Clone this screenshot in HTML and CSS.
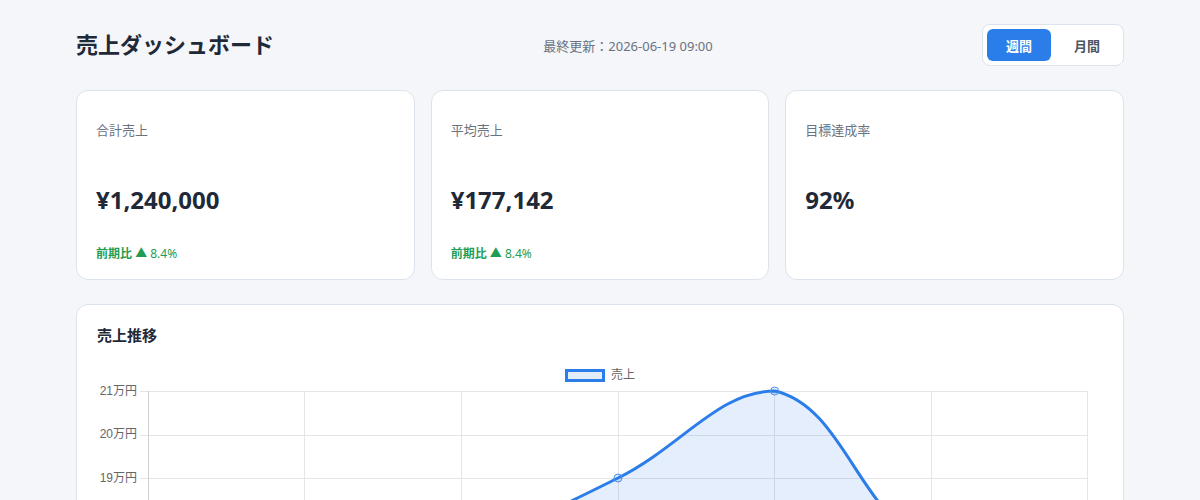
FILE: index.html
```html
<!DOCTYPE html>
<html lang="ja">
<head>
    <meta charset="UTF-8">
    <meta name="viewport" content="width=device-width, initial-scale=1.0">
    <title>売上ダッシュボード</title>
    <link rel="stylesheet" href="styles.css">
</head>
<body>

<div class="wrap">
    <div class="header">
        <h1>売上ダッシュボード</h1>
        <p class="updated">最終更新：2026-06-19 09:00</p>
        <div class="toggle">
            <button class="active">週間</button>
            <button>月間</button>
        </div>
    </div>

    <div class="cards">
        <div class="card">
            <p class="label">合計売上</p>
            <p class="value">¥1,240,000</p>
            <p class="change"><b>前期比</b> ▲ 8.4%</p>
        </div>
        <div class="card">
            <p class="label">平均売上</p>
            <p class="value">¥177,142</p>
            <p class="change"><b>前期比</b> ▲ 8.4%</p>
        </div>
        <div class="card">
            <p class="label">目標達成率</p>
            <p class="value">92%</p>
        </div>
    </div>

    <div class="chart-card">
        <h2>売上推移</h2>
        <svg class="chart" width="1006" height="360" viewBox="0 0 1006 360">
            <!-- 凡例 -->
            <rect x="469.5" y="14.5" width="37" height="10" fill="#e3edfa" stroke="#2b7de9" stroke-width="3"/>
            <text class="legend" x="514" y="20">売上</text>

            <!-- グリッド -->
            <g class="grid">
                <line x1="43" y1="35.5" x2="991" y2="35.5"/>
                <line x1="43" y1="79" x2="991" y2="79"/>
                <line x1="43" y1="122.5" x2="991" y2="122.5"/>
                <line x1="43" y1="166" x2="991" y2="166"/>
                <line x1="43" y1="209.5" x2="991" y2="209.5"/>
                <line x1="43" y1="253" x2="991" y2="253"/>
                <line x1="43" y1="296.5" x2="991" y2="296.5"/>
                <line x1="207.5" y1="35" x2="207.5" y2="304"/>
                <line x1="364.5" y1="35" x2="364.5" y2="304"/>
                <line x1="521.5" y1="35" x2="521.5" y2="304"/>
                <line x1="677.5" y1="35" x2="677.5" y2="304"/>
                <line x1="834.5" y1="35" x2="834.5" y2="304"/>
                <line x1="990.5" y1="35" x2="990.5" y2="304"/>
            </g>
            <line class="axis" x1="51.5" y1="35" x2="51.5" y2="304"/>

            <g class="ylabels">
                <text x="40" y="35.5">21万円</text>
                <text x="40" y="79">20万円</text>
                <text x="40" y="122.5">19万円</text>
                <text x="40" y="166">18万円</text>
                <text x="40" y="209.5">17万円</text>
                <text x="40" y="253">16万円</text>
                <text x="40" y="296.5">15万円</text>
            </g>
            <g class="xlabels">
                <text x="51" y="320">6/13</text>
                <text x="207.67" y="320">6/14</text>
                <text x="364.33" y="320">6/15</text>
                <text x="521" y="320">6/16</text>
                <text x="677.67" y="320">6/17</text>
                <text x="834.33" y="320">6/18</text>
                <text x="991" y="320">6/19</text>
            </g>

            <!-- 売上ライン -->
            <path class="area" d="M51,287.3 C113.67,268.16 145,258.59 207.67,239.45 C270.33,220.31 303.07,214.56 364.33,191.6 C428.41,167.58 459.71,152.63 521,122 C585.05,89.99 621.62,35 677.67,35 C746.95,50.39 761.01,158.01 834.33,191.6 C886.34,215.43 928.33,183.77 991,178.55 L991,296 L51,296 Z"/>
            <path class="line" d="M51,287.3 C113.67,268.16 145,258.59 207.67,239.45 C270.33,220.31 303.07,214.56 364.33,191.6 C428.41,167.58 459.71,152.63 521,122 C585.05,89.99 621.62,35 677.67,35 C746.95,50.39 761.01,158.01 834.33,191.6 C886.34,215.43 928.33,183.77 991,178.55"/>
            <g class="points">
                <circle cx="51" cy="287.3" r="4"/>
                <circle cx="207.67" cy="239.45" r="4"/>
                <circle cx="364.33" cy="191.6" r="4"/>
                <circle cx="521" cy="122" r="4"/>
                <circle cx="677.67" cy="35" r="4"/>
                <circle cx="834.33" cy="191.6" r="4"/>
                <circle cx="991" cy="178.55" r="4"/>
            </g>
        </svg>
    </div>
</div>

</body>
</html>
```

FILE: styles.css
```css
body {
    margin: 0;
    background: #f4f6fa;
    font-family: "Noto Sans", "Noto Sans CJK JP", sans-serif;
    color: #1f2937;
}
p {
    margin: 0;
}
.wrap {
    width: 1048px;
    margin: 0 auto;
    padding: 24px 0;
}
.header {
    display: flex;
    justify-content: space-between;
    align-items: center;
    height: 42px;
}
h1 {
    margin: 0 0 3px;
    font-size: 22px;
    font-weight: 700;
    line-height: 30px;
}
.updated {
    font-size: 13px;
    color: #6b7280;
}
.toggle {
    display: flex;
    gap: 4px;
    padding: 4px;
    background: white;
    border: 1px solid #dde3eb;
    border-radius: 8px;
}
.toggle button {
    width: 64px;
    height: 32px;
    border: none;
    border-radius: 6px;
    background: white;
    color: #4b5563;
    font-family: inherit;
    font-size: 13px;
    font-weight: 700;
    cursor: pointer;
}
.toggle button.active {
    background: #2b7de9;
    color: white;
}
.cards {
    display: grid;
    grid-template-columns: repeat(3, 1fr);
    gap: 16px;
    margin-top: 24px;
}
.card {
    height: 190px;
    box-sizing: border-box;
    padding: 29px 19px 16px;
    background: white;
    border: 1px solid #dde3eb;
    border-radius: 12px;
}
.label {
    font-size: 13px;
    line-height: 20px;
    color: #6b7280;
}
.value {
    margin-top: 45px;
    font-size: 24px;
    font-weight: 700;
    line-height: 30px;
}
.change {
    margin-top: 30px;
    font-size: 12px;
    line-height: 18px;
    color: #1f9d55;
}
.chart-card {
    margin-top: 24px;
    padding: 20px;
    background: white;
    border: 1px solid #dde3eb;
    border-radius: 12px;
}
h2 {
    margin: 0;
    font-size: 15px;
    font-weight: 700;
    line-height: 20px;
}
.chart {
    display: block;
    margin-top: 11px;
    font-family: "Liberation Sans", "Noto Sans CJK JP", sans-serif;
    font-size: 12px;
}
.chart text {
    fill: #666;
}
.legend {
    dominant-baseline: middle;
}
.grid line {
    stroke: #e5e5e5;
    stroke-width: 1;
    shape-rendering: crispEdges;
}
.axis {
    stroke: #d0d0d0;
    stroke-width: 1;
    shape-rendering: crispEdges;
}
.ylabels text {
    text-anchor: end;
    dominant-baseline: middle;
}
.xlabels text {
    text-anchor: middle;
}
.area {
    fill: rgba(43, 125, 233, 0.13);
}
.line {
    fill: none;
    stroke: #2b7de9;
    stroke-width: 3;
}
.points circle {
    fill: rgba(43, 125, 233, 0.13);
    stroke: #4a90ea;
    stroke-width: 1;
}
```
